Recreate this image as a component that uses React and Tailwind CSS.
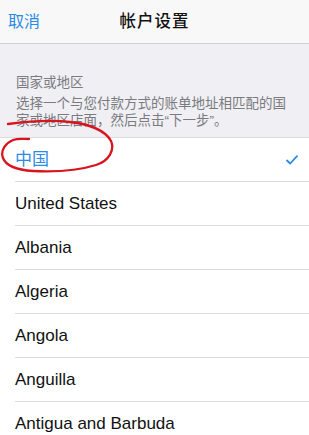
import React from 'react';

const countries = ['United States', 'Albania', 'Algeria', 'Angola', 'Anguilla', 'Antigua and Barbuda'];

const font = { fontFamily: '"Liberation Sans", Arial, "Noto Sans CJK SC", sans-serif' };

export default function App() {
    return (
        <div className="relative w-[309px] h-[435px] overflow-hidden bg-white" style={font}>
            {/* Nav bar */}
            <div className="h-[44px] bg-[#f8f8f8] border-b border-[#cfcfd3] grid grid-cols-[1fr_auto_1fr] items-center">
                <span className="pl-[8px] text-[16px] text-[#2a8ae6]">取消</span>
                <span className="text-[16.5px] font-medium text-[#111] tracking-[1px]">帐户设置</span>
                <span />
            </div>

            {/* Section header */}
            <div className="h-[93px] bg-[#efeff4] px-[16px] pt-[29px] text-[#7a7a7f]">
                <div className="text-[13.5px] leading-[20px]">国家或地区</div>
                <div className="text-[13.5px] leading-[17px] mt-[2px]">
                    选择一个与您付款方式的账单地址相匹配的国家或地区店面，然后点击“下一步”。
                </div>
            </div>

            {/* List */}
            <div className="border-t border-[#dcdce0]">
                <div className="h-[44px] pl-[15px]">
                    <div className="h-full border-b border-[#dcdce0] flex items-center justify-between pr-[11px]">
                        <span className="text-[17px] text-[#2a8ae6]">中国</span>
                        <svg width="12" height="10" viewBox="0 0 12 10" fill="none">
                            <path d="M1 5.5 L4.2 8.5 L11 1.2" stroke="#2a8ae6" strokeWidth="1.8" strokeLinecap="round" strokeLinejoin="round" />
                        </svg>
                    </div>
                </div>
                {countries.map((c) => (
                    <div key={c} className="h-[44px] pl-[15px]">
                        <div className="h-full border-b border-[#dcdce0] flex items-center">
                            <span className="text-[17px] text-[#111]">{c}</span>
                        </div>
                    </div>
                ))}
            </div>

            {/* Red hand-drawn annotation */}
            <svg className="absolute left-0 top-0 pointer-events-none" width="309" height="435">
                <path
                    d="M8 124 C30 121 55 120 70 122 C88 124 105 130 111 141 C115 150 109 161 96 165 C80 170 55 172 33 171 C18 170 6 166 3 158 C0 150 6 143 13 140 C18 138 24 139 29 139"
                    fill="none"
                    stroke="#d8141e"
                    strokeWidth="2.3"
                    strokeLinecap="round"
                />
            </svg>
        </div>
    );
}
